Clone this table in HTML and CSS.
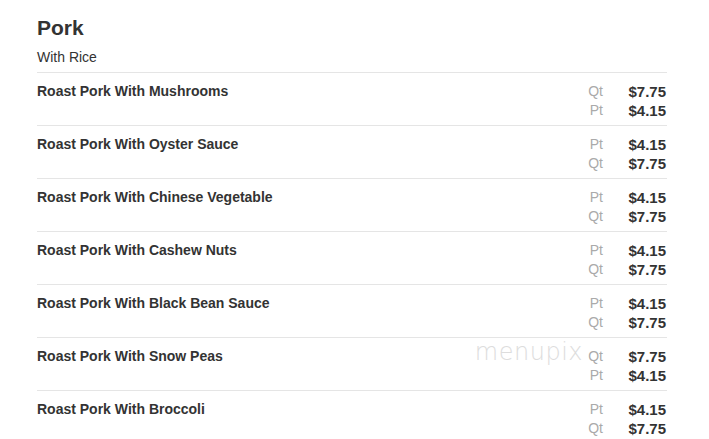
FILE: index.html
```html
<!DOCTYPE html>
<html lang="en">
<head>
    <title>Pork</title>
    <link rel="stylesheet" href="styles.css">
</head>
<body>
    <div class="menu-section">
      <h2>Pork</h2>
      <p class="section-note">With Rice</p>

      <div class="menu-item">
        <div class="item-name">Roast Pork With Mushrooms</div>
        <div class="item-prices">
          <span class="size">Qt</span><span class="price">$7.75</span>
          <span class="size">Pt</span><span class="price">$4.15</span>
        </div>
      </div>

      <div class="menu-item">
        <div class="item-name">Roast Pork With Oyster Sauce</div>
        <div class="item-prices">
          <span class="size">Pt</span><span class="price">$4.15</span>
          <span class="size">Qt</span><span class="price">$7.75</span>
        </div>
      </div>

      <div class="menu-item">
        <div class="item-name">Roast Pork With Chinese Vegetable</div>
        <div class="item-prices">
          <span class="size">Pt</span><span class="price">$4.15</span>
          <span class="size">Qt</span><span class="price">$7.75</span>
        </div>
      </div>

      <div class="menu-item">
        <div class="item-name">Roast Pork With Cashew Nuts</div>
        <div class="item-prices">
          <span class="size">Pt</span><span class="price">$4.15</span>
          <span class="size">Qt</span><span class="price">$7.75</span>
        </div>
      </div>

      <div class="menu-item">
        <div class="item-name">Roast Pork With Black Bean Sauce</div>
        <div class="item-prices">
          <span class="size">Pt</span><span class="price">$4.15</span>
          <span class="size">Qt</span><span class="price">$7.75</span>
        </div>
      </div>

      <div class="menu-item">
        <div class="item-name">Roast Pork With Snow Peas</div>
        <div class="item-prices">
          <span class="watermark">menupix</span>
          <span class="size">Qt</span><span class="price">$7.75</span>
          <span class="size">Pt</span><span class="price">$4.15</span>
        </div>
      </div>

      <div class="menu-item">
        <div class="item-name">Roast Pork With Broccoli</div>
        <div class="item-prices">
          <span class="size">Pt</span><span class="price">$4.15</span>
          <span class="size">Qt</span><span class="price">$7.75</span>
        </div>
      </div>
    </div>
</body>
</html>
```

FILE: styles.css
```css
body {
  margin: 0;
  background: #fff;
  font-family: "Liberation Sans", Arial, sans-serif;
  color: #333;
}

.menu-section {
  width: 630px;
  padding: 14px 0 0 37px;
}

.menu-section h2 {
  margin: 0;
  font-size: 21px;
  line-height: 28px;
  font-weight: bold;
}

.section-note {
  margin: 6px 0 0;
  font-size: 14px;
  line-height: 18px;
  padding-bottom: 6px;
}

.menu-item {
  display: flex;
  justify-content: space-between;
  border-top: 1px solid #e5e5e5;
  padding: 9px 0 5px;
}

.item-name {
  font-size: 14px;
  font-weight: bold;
  line-height: 19px;
}

.item-prices {
  position: relative;
  display: grid;
  grid-template-columns: auto 64px;
  font-size: 14px;
  line-height: 19px;
  text-align: right;
}

.size {
  color: #aaa;
}

.price {
  font-size: 15px;
  font-weight: bold;
  padding-right: 1px;
}

.watermark {
  position: absolute;
  right: 84px;
  top: -4px;
  font-family: "DejaVu Sans", sans-serif;
  font-weight: 200;
  font-size: 24px;
  letter-spacing: 0.5px;
  color: #ddd;
}
```
